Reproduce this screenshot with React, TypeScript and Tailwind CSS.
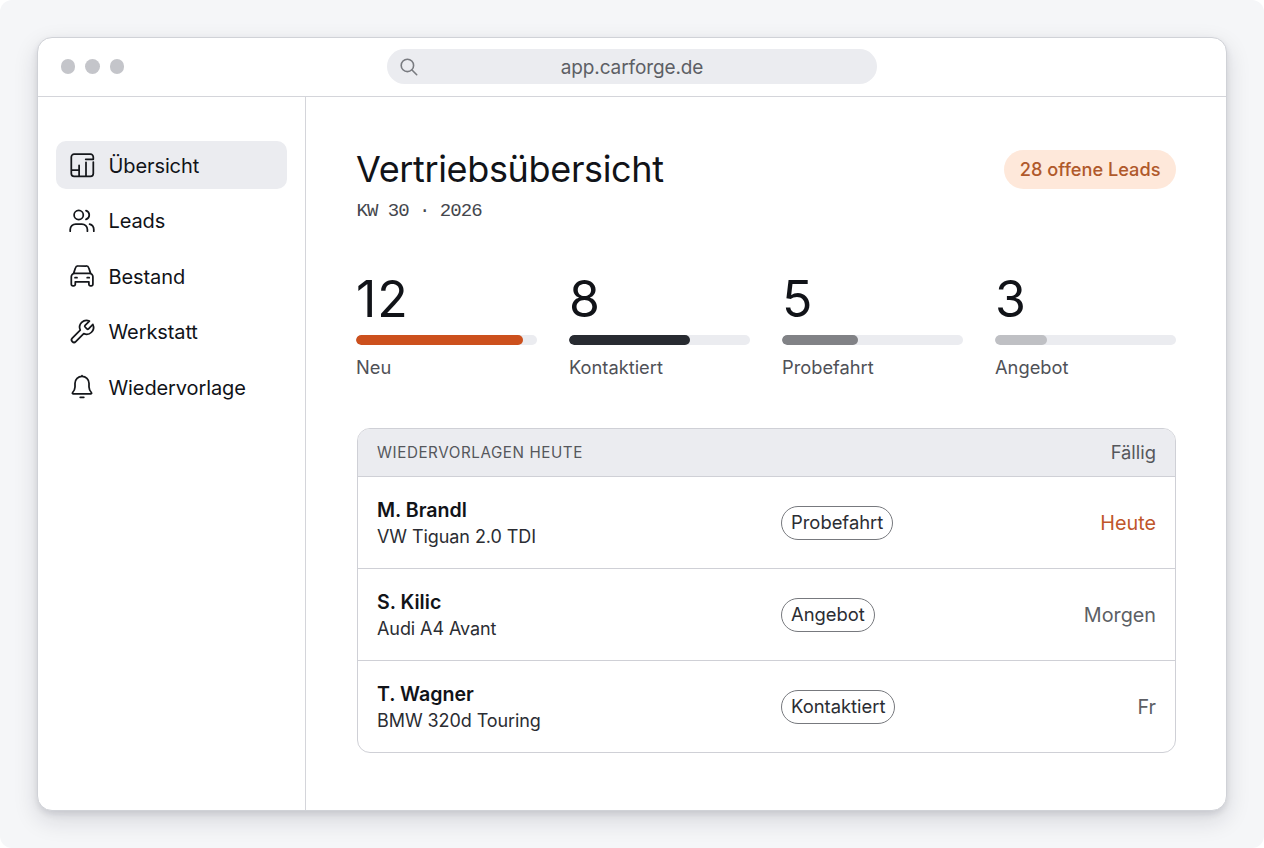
import React from "react";

type IconProps = { children: React.ReactNode };

function Icon({ children }: IconProps) {
  return (
    <svg
      width="28"
      height="28"
      viewBox="0 0 28 28"
      fill="none"
      stroke="#15171b"
      strokeWidth="1.75"
      strokeLinecap="round"
      strokeLinejoin="round"
      className="shrink-0"
    >
      {children}
    </svg>
  );
}

const DashboardIcon = () => (
  <Icon>
    <path d="M25.300 11V22.600a2.800 2.800 0 0 1-2.800 2.800H6.100a2.800 2.800 0 0 1-2.800-2.800V6A2.800 2.800 0 0 1 6.100 3.200H22.500a2.800 2.800 0 0 1 2.800 2.800V8.300h-7.600M3.300 19.200h7.800M11.100 14.300v11M18 11.300v14" />
  </Icon>
);

const UsersIcon = () => (
  <Icon>
    <circle cx="10.7" cy="8" r="4.6" />
    <path d="M2.200 24.200v-1.600a5.600 5.600 0 0 1 5.600-5.600h6a5.600 5.600 0 0 1 5.600 5.600v1.600M18 3.600a4.600 4.600 0 0 1 0 8.800M21.600 17.200a5.600 5.600 0 0 1 4.200 5.400v1.600" />
  </Icon>
);

const CarIcon = () => (
  <Icon>
    <path d="M5.600 11.400l1.800-5.400A2.800 2.800 0 0 1 10.100 4h8a2.800 2.800 0 0 1 2.700 2l1.800 5.400M3.300 14.800a3.400 3.400 0 0 1 3.400-3.400h14.800a3.400 3.400 0 0 1 3.400 3.400v7.400a1.600 1.600 0 0 1-1.600 1.600h-.8a1.600 1.600 0 0 1-1.600-1.600V19.800H7.300v2.400a1.600 1.600 0 0 1-1.600 1.600h-.8a1.600 1.600 0 0 1-1.600-1.600zM7 15.700h2M19.200 15.700h2" />
  </Icon>
);

const WrenchIcon = () => (
  <Icon>
    <path
      transform="translate(0.1 0.1) scale(1.155)"
      d="M14.700 6.300a1 1 0 0 0 0 1.400l1.600 1.600a1 1 0 0 0 1.400 0l3.770-3.770a6 6 0 0 1-7.940 7.940l-6.910 6.910a2.120 2.120 0 0 1-3-3l6.910-6.910a6 6 0 0 1 7.940-7.940l-3.760 3.760z"
      strokeWidth="1.500"
    />
  </Icon>
);

const BellIcon = () => (
  <Icon>
    <path d="M14 3.300a7 7 0 0 0-7 7v3.700c0 2.300-1.200 4.200-2.500 5.800a.6.6 0 0 0 .5 1h18a.6.6 0 0 0 .5-1c-1.300-1.600-2.500-3.500-2.500-5.800v-3.700A7 7 0 0 0 14 3.300zM14 2.600v.6M12.200 24.300h3.600" />
  </Icon>
);

const nav = [
  { label: "Übersicht", icon: <DashboardIcon />, active: true },
  { label: "Leads", icon: <UsersIcon /> },
  { label: "Bestand", icon: <CarIcon /> },
  { label: "Werkstatt", icon: <WrenchIcon /> },
  { label: "Wiedervorlage", icon: <BellIcon /> },
];

const stats = [
  { value: "12", label: "Neu", fill: "w-[167px] bg-[#cc501d]" },
  { value: "8", label: "Kontaktiert", fill: "w-[121px] bg-[#282b31]" },
  { value: "5", label: "Probefahrt", fill: "w-[76px] bg-[#818286]" },
  { value: "3", label: "Angebot", fill: "w-[52px] bg-[#bfc0c4]" },
];

const rows = [
  { name: "M. Brandl", car: "VW Tiguan 2.0 TDI", status: "Probefahrt", due: "Heute", urgent: true },
  { name: "S. Kilic", car: "Audi A4 Avant", status: "Angebot", due: "Morgen" },
  { name: "T. Wagner", car: "BMW 320d Touring", status: "Kontaktiert", due: "Fr" },
];

export default function App() {
  return (
    <div className="h-[848px] w-[1264px] bg-white font-['Inter',sans-serif] text-[#111318]">
      <div className="h-full rounded-[12px] bg-[#f5f6f8] pt-[37px] pl-[37px]">
        <div className="flex h-[774px] w-[1190px] flex-col overflow-hidden rounded-[15px] border border-[#d0d2d7] bg-white shadow-[0_9px_24px_rgba(20,24,40,0.14),0_3px_6px_rgba(20,24,40,0.10)]">
          <header className="grid h-[59px] shrink-0 grid-cols-[349px_490px_1fr] items-center border-b border-[#d4d5da] pb-px">
            <div className="flex gap-[10px] pl-[22.500px]">
              <span className="size-[14.500px] rounded-full bg-[#c4c5ca]" />
              <span className="size-[14.500px] rounded-full bg-[#c4c5ca]" />
              <span className="size-[14.500px] rounded-full bg-[#c4c5ca]" />
            </div>
            <div className="grid h-[35px] grid-cols-[44px_1fr_44px] items-center rounded-full bg-[#ebecf0] text-center text-[19px] tracking-[-0.100px] text-[#5d5f65]">
              <svg className="ml-[13px]" width="18" height="18" viewBox="0 0 18 18" fill="none" stroke="#797b80" strokeWidth="1.600" strokeLinecap="round">
                <circle cx="7.400" cy="7.400" r="6.200" />
                <path d="M12 12l4.700 4.700" />
              </svg>
              <span className="pt-[3px]">app.carforge.de</span>
            </div>
          </header>
          <div className="flex grow">
            <nav className="flex w-[268px] shrink-0 flex-col gap-[7.500px] border-r border-[#d4d5da] px-[18px] pt-[44px]">
              {nav.map((n) => (
                <div
                  key={n.label}
                  className={`flex h-[48px] w-[230.500px] items-center gap-[12.500px] rounded-[10px] pl-[12px] text-[20px] tracking-[-0.100px] ${n.active ? "bg-[#ebecf0]" : ""}`}
                >
                  {n.icon}
                  <span className="pt-px">{n.label}</span>
                </div>
              ))}
            </nav>
            <main className="grow pr-[50px] pl-[51px]">
              <div className="-ml-px flex justify-between pt-[50px]">
                <div>
                  <h1 className="text-[36px] leading-[44px] tracking-[-0.350px]">Vertriebsübersicht</h1>
                  <p className="mt-[8px] pl-[0.500px] font-['Liberation_Mono',monospace] text-[19px] leading-[25px] tracking-[-0.980px] text-[#45474d]">KW 30 · 2026</p>
                </div>
                <span className="mt-[3px] flex h-[39px] items-center rounded-full bg-[#fee8da] px-[15.500px] text-[18.200px] font-medium text-[#b0592b]">28 offene Leads</span>
              </div>
              <div className="mt-[47px] -ml-px grid grid-cols-4 gap-[32px]">
                {stats.map((s) => (
                  <div key={s.label}>
                    <div className="text-[50px] leading-[56px] tracking-[1px]">{s.value}</div>
                    <div className="mt-[8px] h-[10px] overflow-hidden rounded-full bg-[#ebecf0]">
                      <div className={`h-full rounded-full ${s.fill}`} />
                    </div>
                    <div className="mt-[10px] mb-px text-[18.300px] leading-[24px] text-[#4f5157]">{s.label}</div>
                  </div>
                ))}
              </div>
              <section className="mt-[48px] overflow-hidden rounded-[13px] border border-[#cfd0d6]">
                <div className="flex h-[47px] items-center justify-between bg-[#ebecf0] px-[19px] text-[#55575c]">
                  <span className="pt-[2px] text-[15.200px] tracking-[0.570px]">WIEDERVORLAGEN HEUTE</span>
                  <span className="text-[18.400px]">Fällig</span>
                </div>
                {rows.map((r) => (
                  <div key={r.name} className="grid h-[92px] grid-cols-[404px_1fr_auto] items-center border-t border-[#cfd0d6] px-[19px]">
                    <div className="pt-px">
                      <div className="text-[19.600px] leading-[27px] font-semibold">{r.name}</div>
                      <div className="text-[18px] leading-[26px] tracking-[-0.080px] text-[#2b2d33]">{r.car}</div>
                    </div>
                    <div>
                      <span className="inline-flex h-[34px] items-center rounded-full border border-[#77797e] px-[9px] text-[18.400px] text-[#2b2d33]">{r.status}</span>
                    </div>
                    <div className={`pt-[2px] text-[19.800px] ${r.urgent ? "text-[#c0562a]" : "text-[#5d5f65]"}`}>{r.due}</div>
                  </div>
                ))}
              </section>
            </main>
          </div>
        </div>
      </div>
    </div>
  );
}
